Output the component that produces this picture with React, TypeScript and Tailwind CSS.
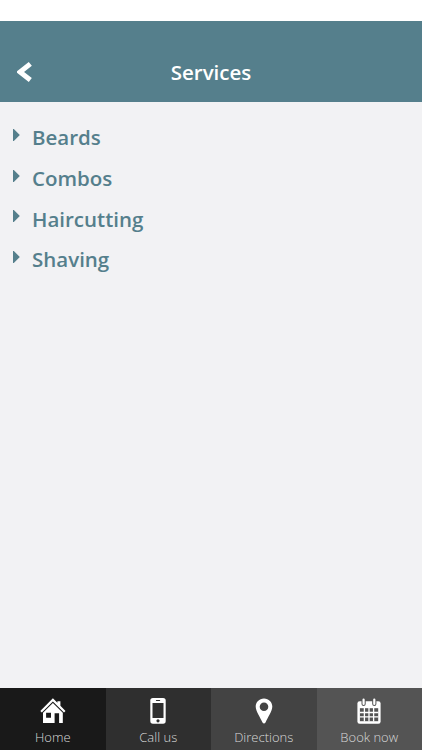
import type { ReactNode } from "react";

const services = ["Beards", "Combos", "Haircutting", "Shaving"];

function BackIcon() {
  return (
    <svg width="16" height="22" viewBox="0 0 16 22" fill="none">
      <path d="M13.3 2.9 L3 11 L13.3 18.9" stroke="white" strokeWidth="5" />
    </svg>
  );
}

function HomeIcon() {
  return (
    <svg width="26" height="26" viewBox="0 0 26 26" fill="white">
      <path d="M12.9 0.2 L17.4 4.7 V3.2 H20.4 V7.7 L25.5 13 L24 14.5 L12.9 3.5 L1.8 14.5 L0.3 13 Z" />
      <path
        fillRule="evenodd"
        d="M12.9 4.9 L22.8 14.8 V25 H19.1 V15.2 H14.6 V25 H3 V14.8 Z M6.1 14.7 V19.7 H11 V14.7 Z"
      />
    </svg>
  );
}

function PhoneIcon() {
  return (
    <svg width="26" height="26" viewBox="0 0 26 26">
      <rect x="5.3" y="0" width="15.4" height="25.7" rx="2.6" fill="white" />
      <rect x="7.5" y="5" width="11" height="15" fill="#2f2f2f" />
      <rect x="10.9" y="2.1" width="4.3" height="1" rx="0.5" fill="#2f2f2f" />
      <circle cx="13" cy="22.8" r="1.6" fill="#2f2f2f" />
    </svg>
  );
}

function PinIcon() {
  return (
    <svg width="26" height="26" viewBox="0 0 26 26" fill="white">
      <path
        fillRule="evenodd"
        d="M13 0.4 C8.2 0.4 4.7 4 4.7 8.6 C4.7 13.3 9.2 19.2 11.5 24.6 Q13 26.6 14.5 24.6 C16.8 19.2 21.3 13.3 21.3 8.6 C21.3 4 17.8 0.4 13 0.4 Z M13 4.5 A4.3 4.3 0 1 1 13 13.1 A4.3 4.3 0 1 1 13 4.5 Z"
      />
    </svg>
  );
}

function CalendarIcon() {
  return (
    <svg width="26" height="26" viewBox="0 0 26 26">
      <rect x="1.4" y="3.2" width="23.2" height="22.5" rx="2.2" fill="white" />
      <g stroke="#545454" strokeWidth="4.2" strokeLinecap="round">
        <path d="M7.6 2.6 V6 M18.3 2.6 V6" />
      </g>
      <g stroke="white" strokeWidth="2.2" strokeLinecap="round">
        <path d="M7.6 1.6 V6 M18.3 1.6 V6" />
      </g>
      <rect x="3.9" y="10.2" width="18.3" height="13" fill="#545454" />
      <path
        d="M8.4 10 V23.4 M13 10 V23.4 M17.6 10 V23.4 M3.7 14.5 H22.4 M3.7 18.9 H22.4"
        stroke="white"
        strokeWidth="1.3"
      />
    </svg>
  );
}

const tabs: { label: string; icon: ReactNode; className: string }[] = [
  { label: "Home", icon: <HomeIcon />, className: "bg-[#191919]" },
  { label: "Call us", icon: <PhoneIcon />, className: "bg-[#2f2f2f]" },
  { label: "Directions", icon: <PinIcon />, className: "bg-[#434343]" },
  { label: "Book now", icon: <CalendarIcon />, className: "bg-[#545454]" },
];

export default function App() {
  return (
    <div className="flex h-screen flex-col overflow-hidden bg-[#f2f2f4] font-['Open_Sans',sans-serif]">
      <div className="h-[21px] shrink-0 bg-white" />
      <header className="grid h-[81px] shrink-0 grid-cols-[1fr_auto_1fr] items-center bg-[#557f8c] pt-[21px] text-white">
        <button type="button" aria-label="Back" className="ml-[17px] w-4">
          <BackIcon />
        </button>
        <h1 className="text-[20.5px] leading-7 font-semibold">Services</h1>
      </header>

      <main className="flex-1 pt-[15px]">
        <ul>
          {services.map((service) => (
            <li key={service} className="flex h-[40.7px] items-center pl-[13px] text-[#557f8c]">
              <svg width="7" height="12" viewBox="0 0 7 12" className="mb-[5px] shrink-0">
                <path d="M0 0 H0.8 L6.8 6 L0.8 12 H0 Z" fill="currentColor" />
              </svg>
              <span className="ml-3 text-[20.5px] leading-7 font-semibold">{service}</span>
            </li>
          ))}
        </ul>
      </main>

      <nav className="grid h-[62px] shrink-0 grid-cols-4">
        {tabs.map((tab) => (
          <button
            key={tab.label}
            type="button"
            className={`flex flex-col items-center pt-2.5 text-[13px] leading-[18px] font-light text-[#d8d8d8] ${tab.className}`}
          >
            {tab.icon}
            <span className="mt-1">{tab.label}</span>
          </button>
        ))}
      </nav>
    </div>
  );
}
